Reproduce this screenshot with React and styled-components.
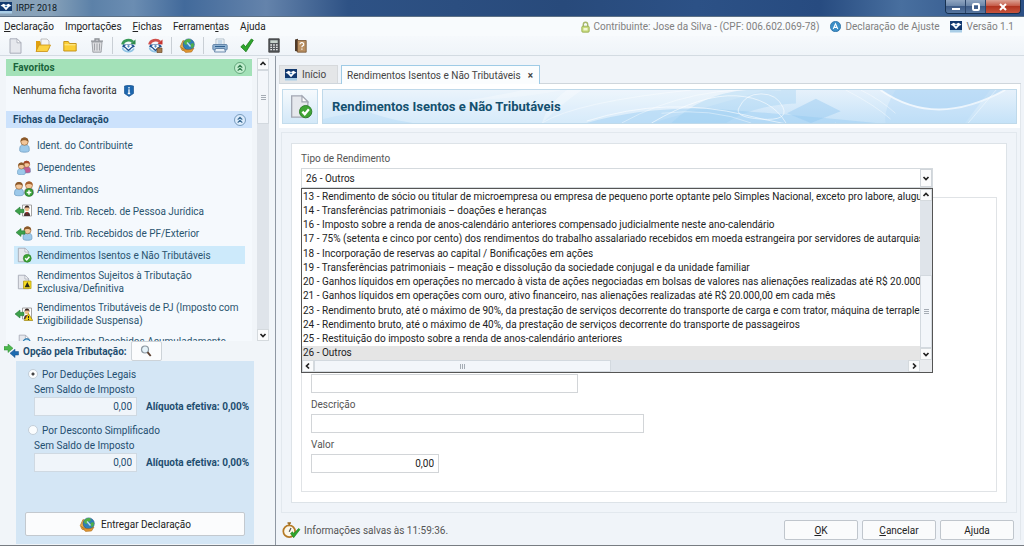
import React, { useState } from 'react';
import styled, { createGlobalStyle, css } from 'styled-components';

const GlobalStyle = createGlobalStyle`
    * {
        box-sizing: border-box;
    }
    body {
        margin: 0;
        font-family: Roboto, "Liberation Sans", sans-serif;
        font-size: 10px;
        line-height: 13px;
        color: #333;
        background: #f0f4f8;
    }
    button, input {
        font: inherit;
        color: inherit;
        margin: 0;
        padding: 0;
    }
    ul {
        list-style: none;
        margin: 0;
        padding: 0;
    }
    svg {
        display: block;
        flex: none;
    }
`;

/* window */

const Window = styled.div`
    display: flex;
    flex-direction: column;
    height: 100vh;
    min-height: 540px;
    overflow: hidden;
    border-bottom: 1px solid #777c82;
`;

const TitleBar = styled.div`
    display: flex;
    align-items: flex-start;
    justify-content: space-between;
    height: 17px;
    flex: none;
    padding-right: 3px;
    border-bottom: 1px solid #5d7186;
    background: linear-gradient(90deg, #8ba3b8 0, #86a1b9 5%, #5c81a8 9%, #6b8db2 13%, #426a9b 18%, #6483ab 26%, #2e5285 34%, #284a7b 55%, #2c5186 68%, #274b80 80%, #486f9f 88%, #2b4f85 100%);
`;

const Title = styled.div`
    display: flex;
    align-items: center;
    gap: 4px;
    height: 16px;
    font-size: 9px;
    color: #0b1622;
`;

const WindowButtons = styled.div`
    display: flex;
    height: 14px;
    border: 1px solid #16304f;
    border-top: none;
    border-radius: 0 0 4px 4px;
    overflow: hidden;
`;

const WindowButton = styled.button`
    display: flex;
    align-items: center;
    justify-content: center;
    width: ${(props) => (props.$close ? 34 : 20)}px;
    border: none;
    border-right: ${(props) => (props.$close ? 'none' : '1px solid #2b456a')};
    background: ${(props) => (props.$close
        ? 'linear-gradient(#dba295, #c55b48 45%, #b03420 50%, #c8543d)'
        : 'linear-gradient(#8fa5c1, #6b86a9 45%, #3e5c88 50%, #57769f)')};
`;

const MenuBar = styled.div`
    display: flex;
    align-items: center;
    justify-content: space-between;
    height: 19px;
    flex: none;
    padding: 0 10px 0 4px;
    background: #f8fbfd;
`;

const MenuList = styled.div`
    display: flex;
    gap: 11px;
`;

const MenuButton = styled.button`
    border: none;
    background: none;
    color: #222;
`;

const InfoList = styled.div`
    display: flex;
    gap: 11px;
    color: #808080;
`;

const Info = styled.span`
    display: flex;
    align-items: center;
    gap: 4px;
`;

const ToolBar = styled.div`
    display: flex;
    align-items: center;
    height: 20px;
    flex: none;
    padding-left: 7px;
    border-bottom: 1px solid #d3dbe2;
    background: linear-gradient(#f6f9fc, #eff4f9);
`;

const ToolButton = styled.button`
    display: flex;
    align-items: center;
    justify-content: center;
    width: 17px;
    height: 18px;
    margin-right: ${(props) => props.$gap || 10}px;
    border: none;
    background: none;
`;

const ToolSeparator = styled.span`
    width: 1px;
    height: 17px;
    margin-right: 7px;
    background: #c9cfd5;
`;

const Content = styled.div`
    display: flex;
    flex: 1;
    min-height: 0;
`;

/* sidebar */

const Sidebar = styled.aside`
    display: flex;
    flex-direction: column;
    flex: none;
    width: 276px;
    padding-top: 2px;
    border-right: 1px solid #8f98a3;
    background: #f1f5f9;
    color: #24506f;
`;

const SidebarScroll = styled.div`
    display: flex;
    justify-content: space-between;
    flex: 1;
    min-height: 0;
    padding: 0 6px;
    overflow: hidden;
`;

const SidebarGroups = styled.div`
    width: 246px;
    padding-top: 1px;
    overflow: hidden;
    background: #f5f9fd;
`;

const GroupHeader = styled.h2`
    display: flex;
    align-items: center;
    justify-content: space-between;
    height: 17px;
    margin: 0;
    padding: 0 6px 0 7px;
    font-size: 10px;
    font-weight: 700;
    color: ${(props) => (props.$green ? '#19633a' : '#1c4a6c')};
    background: ${(props) => (props.$green ? '#a3e1b8' : '#cce2fc')};
`;

const CollapseButton = styled.button`
    display: flex;
    width: 12px;
    height: 12px;
    border: none;
    background: none;
`;

const Empty = styled.p`
    display: flex;
    align-items: center;
    gap: 7px;
    margin: 0;
    padding: 8px 7px 14px;
    color: #333;
`;

const NavList = styled.ul`
    padding: 8px 7px 0 8px;
`;

const NavItem = styled.a`
    display: flex;
    align-items: center;
    gap: 3px;
    height: ${(props) => (props.$tall ? 28 : 18)}px;
    margin-bottom: 4px;
    color: #2a546f;
    text-decoration: none;
    ${(props) => props.$active && css`
        background: #cdeafb;
    `}
`;

const NavIcon = styled.span`
    display: flex;
    justify-content: center;
    flex: none;
    width: 20px;
`;

const Options = styled.section`
    flex: none;
    color: #1f4e70;
`;

const OptionsHeader = styled.div`
    display: flex;
    align-items: center;
    gap: 4px;
    height: 20px;
    padding-left: 4px;
    font-weight: 700;
`;

const SearchButton = styled.button`
    display: flex;
    align-items: center;
    justify-content: center;
    width: 31px;
    height: 20px;
    border: 1px solid #cdd3d8;
    border-radius: 2px;
    background: #fbfcfd;
`;

const OptionsBody = styled.div`
    display: flex;
    flex-direction: column;
    height: 183px;
    margin: 0 21px 1px 16px;
    padding: 5px 9px 8px;
    background: #d4e6f5;
`;

const RadioLabel = styled.label`
    display: flex;
    align-items: center;
    gap: 4px;
    height: 16px;
    margin-left: 3px;
`;

const Radio = styled.input`
    appearance: none;
    width: 10px;
    height: 10px;
    border: 1px solid #c3ced8;
    border-radius: 50%;
    background: #fbfdfe;

    &:checked {
        background: radial-gradient(circle, #444 0, #444 1px, #fbfdfe 2px);
    }
`;

const OptionField = styled.div`
    display: grid;
    grid-template-columns: 103px auto;
    align-items: center;
    column-gap: 9px;
    margin: 0 0 6px 9px;
    white-space: nowrap;
`;

const OptionLabel = styled.label`
    grid-column: 1 / 3;
    height: 15px;
    line-height: 15px;
`;

const OptionInput = styled.input`
    width: 103px;
    height: 19px;
    padding: 0 4px;
    border: 1px solid #cfd9e2;
    background: #f0f5fa;
    text-align: right;
`;

const SubmitButton = styled.button`
    display: flex;
    align-items: center;
    justify-content: center;
    gap: 5px;
    height: 24px;
    margin-top: auto;
    border: 1px solid #c3c9cf;
    border-radius: 2px;
    background: #fbfcfd;
    color: #222;
`;

/* scroll bars */

const Bar = styled.div`
    display: flex;
    flex-direction: ${(props) => (props.$horizontal ? 'row' : 'column')};
    flex: none;
    ${(props) => (props.$horizontal ? 'height: 12px;' : 'width: 12px;')}
    background: #dfe4ea;
`;

const BarButton = styled.button`
    display: flex;
    align-items: center;
    justify-content: center;
    flex: none;
    width: 12px;
    height: 12px;
    border: 1px solid #d5dade;
    background: #fafbfc;
`;

const BarTrack = styled.div`
    display: flex;
    flex-direction: inherit;
    justify-content: ${(props) => (props.$end ? 'flex-end' : 'flex-start')};
    flex: 1;
    min-height: 0;
`;

const BarThumb = styled.div`
    display: flex;
    align-items: center;
    justify-content: center;
    flex: 0 0 ${(props) => props.$size};
    border: 1px solid #d3d9df;
    background: #f3f6fa;
`;

/* main area */

const Main = styled.main`
    display: flex;
    flex-direction: column;
    flex: 1;
    min-width: 0;
    padding: 9px 3px 5px;
    background: #f0f4f9;
`;

const Tabs = styled.div`
    display: flex;
    align-items: flex-end;
    gap: 3px;
    flex: none;
    height: 19px;
    border-bottom: 1px solid #cfd6dc;
`;

const Tab = styled.button`
    display: flex;
    align-items: center;
    gap: 5px;
    height: ${(props) => (props.$active ? 19 : 18)}px;
    padding: 0 ${(props) => (props.$active ? 6 : 11)}px 0 5px;
    border: 1px solid ${(props) => (props.$active ? '#9fcbe6' : '#d6d9dc')};
    border-bottom: none;
    background: ${(props) => (props.$active ? '#fbfdfe' : '#e4e6e8')};
    color: #444;
    ${(props) => props.$active && css`
        margin-bottom: -1px;
    `}
`;

const TabClose = styled.span`
    margin-left: 2px;
    font-weight: 700;
`;

const Page = styled.div`
    display: flex;
    flex-direction: column;
    flex: 1;
    min-height: 0;
    border-right: 1px solid #e2e7ec;
`;

const PageHeader = styled.div`
    display: flex;
    gap: 4px;
    flex: none;
    height: 44px;
    padding: 5px 3px 4px;
    background: #fff;
`;

const PageIcon = styled.div`
    display: flex;
    align-items: center;
    justify-content: center;
    width: 36px;
    border: 1px solid #c3dcec;
    background: linear-gradient(#f6fafd, #d3e8f8);
`;

const Banner = styled.div`
    position: relative;
    display: flex;
    align-items: center;
    flex: 1;
    padding-left: 9px;
    border: 1px solid #bfd9ea;
    background: linear-gradient(#e6f1fb, #c5e2f8);

    svg {
        position: absolute;
        inset: 0;
        width: 100%;
        height: 100%;
    }
`;

const PageTitle = styled.h1`
    position: relative;
    margin: 0;
    font-size: 13px;
    line-height: 16px;
    font-weight: 700;
    color: #14506f;
`;

const Outer = styled.div`
    display: flex;
    flex: 1;
    min-height: 0;
    margin: 4px 3px 0 2px;
    padding: 10px 9px 9px;
    border: 1px solid #e2e8ee;
`;

const Form = styled.form`
    display: flex;
    flex-direction: column;
    flex: 1;
    padding: 7px 9px 10px;
    border: 1px solid #dde3e8;
    background: #fff;
`;

const FieldLabel = styled.label`
    height: 17px;
    line-height: 15px;
    color: #555;
`;

const Combo = styled.div`
    position: relative;
    display: flex;
    flex: none;
    height: 20px;
    margin-right: 64px;
    border: 1px solid #d5dade;
    background: #fff;
`;

const ComboInput = styled.input`
    flex: 1;
    min-width: 0;
    padding: 0 4px;
    border: none;
    outline: none;
    background: none;
    color: #222;
`;

const ComboButton = styled.button`
    display: flex;
    align-items: center;
    justify-content: center;
    width: 12px;
    border: 1px solid #d0d5da;
    background: #fafbfc;
`;

const Popup = styled.div`
    position: absolute;
    z-index: 2;
    top: 19px;
    left: -1px;
    right: -1px;
    height: 185px;
    display: flex;
    flex-direction: column;
    border: 1px solid #555;
    background: #fff;
`;

const PopupTop = styled.div`
    display: flex;
    flex: 1;
    min-height: 0;
`;

const PopupBottom = styled.div`
    background: #e9ebee;
    padding-right: 12px;
`;

const OptionList = styled.ul`
    display: flex;
    flex-direction: column;
    flex: 1;
    min-width: 0;
    overflow: hidden;
    color: #222;
`;

const Option = styled.li`
    display: flex;
    align-items: center;
    flex: 1;
    min-height: 0;
    padding-left: 1px;
    white-space: nowrap;
    background: ${(props) => (props.$selected ? '#e5e5e5' : 'transparent')};
`;

const Details = styled.div`
    display: flex;
    flex-direction: column;
    flex: 1;
    justify-content: flex-end;
    margin-top: 9px;
    padding: 0 9px 18px;
    border: 1px solid #e0e3e6;
`;

const TextInput = styled.input`
    width: ${(props) => props.$width}px;
    height: 19px;
    margin-bottom: ${(props) => (props.$last ? 0 : 4)}px;
    padding: 0 4px;
    border: 1px solid #d2d5d8;
    background: #fff;
    color: #222;
    text-align: ${(props) => (props.$number ? 'right' : 'left')};
`;

const Footer = styled.div`
    display: flex;
    align-items: center;
    justify-content: space-between;
    flex: none;
    padding: 7px 6px 0 3px;
`;

const Status = styled.span`
    display: flex;
    align-items: center;
    gap: 3px;
    color: #555;
`;

const Actions = styled.div`
    display: flex;
    gap: 4px;
`;

const ActionButton = styled.button`
    width: 74px;
    height: 20px;
    border: 1px solid #c0c6cd;
    border-radius: 2px;
    background: #fafbfc;
    color: #222;
`;

/* icons */

const Chevron = ({ dir = 'down' }) => {
    const angle = { down: 0, left: 90, up: 180, right: 270 }[dir];
    return (
        <svg width="8" height="8" viewBox="0 0 8 8">
            <path d="M1.5 3 4 5.5 6.5 3" fill="none" stroke="#222" strokeWidth="1.7" transform={`rotate(${angle} 4 4)`} />
        </svg>
    );
};

const Grip = ({ vertical }) => (
    <svg width="7" height="7" viewBox="0 0 7 7">
        <path d={vertical ? 'M1.5 1v5M3.5 1v5M5.5 1v5' : 'M1 1.5h5M1 3.5h5M1 5.5h5'} stroke="#a5acb4" />
    </svg>
);

const DoubleUp = ({ color, fill }) => (
    <svg width="12" height="12" viewBox="0 0 12 12">
        <circle cx="6" cy="6" r="5.5" fill={fill} stroke={color} strokeWidth=".6" />
        <path d="M3.7 5.7 6 3.4l2.3 2.3M3.7 8.7 6 6.4l2.3 2.3" fill="none" stroke={color} strokeWidth="1.2" />
    </svg>
);

const LogoIcon = () => (
    <svg width="12" height="12" viewBox="0 0 12 12">
        <path d="M0 0h12v9H0z" fill="#12396f" />
        <path d="M0 9h12v2.5H0z" fill="#a9cde6" />
        <path d="M.5 3.8 3.5 1.8 6 3l2.5-1.2 3 2-2.3 1L6 8.300 2.800 4.800z" fill="#fff" />
        <path d="m4.5 4.3 1.500-.7 1.500.7L6 5.500z" fill="#2b6aa8" />
    </svg>
);

const LockIcon = () => (
    <svg width="9" height="12" viewBox="0 0 9 12">
        <path d="M2.3 6V3.4a2.2 2.2 0 0 1 4.4 0V6" fill="none" stroke="#a6b86c" strokeWidth="1.4" />
        <rect x=".8" y="5.2" width="7.4" height="6" rx="1" fill="#c8dc7c" stroke="#94a84c" strokeWidth=".8" />
        <path d="M2.5 7h4v2.4h-4z" fill="#f1f7d4" />
    </svg>
);

const AdjustIcon = () => (
    <svg width="11" height="11" viewBox="0 0 11 11">
        <circle cx="5.5" cy="5.5" r="5.2" fill="#3c8ec6" stroke="#1f6298" strokeWidth=".6" />
        <path d="M3.2 8 5.5 2.8 7.8 8M4 6.4h3" fill="none" stroke="#fff" strokeWidth="1.1" />
    </svg>
);

const FileShape = () => (
    <>
        <path d="M2.5.8h7l4 4v10.400h-11z" fill="#e6e8ed" stroke="#a3a7b3" strokeWidth=".9" />
        <path d="M9.5.8v4h4z" fill="#fff" stroke="#a3a7b3" strokeWidth=".8" />
    </>
);

const NewIcon = () => (
    <svg width="15" height="16" viewBox="1 0 14 16"><FileShape /></svg>
);

const OpenIcon = () => (
    <svg width="16" height="15" viewBox="0 0 16 15">
        <path d="M1 13V3h4l1 2h4v8z" fill="#e0a010" />
        <path d="M6 1h6l2 2v8H6z" fill="#f4f4f4" stroke="#a9a9a9" strokeWidth=".7" />
        <path d="M1 13.5 4 7h11.5l-3 6.5z" fill="#fcd242" stroke="#c98f10" strokeWidth=".8" />
    </svg>
);

const FolderIcon = () => (
    <svg width="14" height="14" viewBox="0 0 14 14">
        <path d="M.8 12V2.5h4.5l1.2 2h6.7V12z" fill="#fbcf35" stroke="#c08d12" strokeWidth=".9" />
        <path d="M1.5 5.8h11" stroke="#fdeb9a" />
    </svg>
);

const TrashIcon = () => (
    <svg width="14" height="15" viewBox="0 0 14 15">
        <path d="M2 4h10l-.9 10.2H2.9z" fill="#dddee1" stroke="#999ca2" strokeWidth=".9" />
        <path d="M4.5 5.5v7M7 5.5v7M9.500 5.5v7" stroke="#a0a3a8" />
        <path d="M1 3.2h12M5 2.6V1h4v1.600" fill="none" stroke="#8b8e94" strokeWidth="1.3" />
    </svg>
);

const SyncIcon = ({ red }) => (
    <svg width="15" height="15" viewBox="0 0 15 15">
        <path d="M1.500 6.500a6 5.300 0 0 1 10.500-2.500" fill="none" stroke={red ? '#d0504c' : '#3a9a58'} strokeWidth="2.800" />
        <path d="m9.500 6 5 .5V1.500z" fill={red ? '#c73430' : '#2f8a4c'} />
        <path d="M2.500 6.500h9.500l2 2-3 1.500-3.500 3.500L4 10 1 8.500z" fill="#1c4f90" />
        <path d="m3.500 8 2-1.200 2 1 2-1 2 1.200-4 3.500z" fill="#fff" />
        <path d="m6 8.600 1.500-.6 1.500.6-1.500 1.200z" fill="#3f82bd" />
        <path d="M1.500 9.500a6 5 0 0 0 11.500 1" fill="none" stroke="#8fc3e4" strokeWidth="1.600" />
        {red && <path d="M9 10h5v4.500H9z" fill="#a57c50" stroke="#6d4b28" strokeWidth=".7" />}
    </svg>
);

const GlobeIcon = () => (
    <svg width="17" height="15" viewBox="0 0 16 15">
        <path d="M.8 8.500 3.500 2.500l4 2 1 9-6-1.200z" fill="#eeb04a" stroke="#b0711c" strokeWidth=".7" />
        <circle cx="9.200" cy="6.500" r="5.600" fill="#2f7fb8" stroke="#1c5280" strokeWidth=".6" />
        <path d="M4.500 4a6 6 0 0 1 6-3l1 2.500-3 1.500-1 2-2.500-.8zM11 6l3-1 .5 3-2.500 2.500z" fill="#4fb04a" />
        <path d="M2 9.500c3 2.500 7.500 3.500 12.500.5l-2.500 4-6 .4z" fill="#e49a34" stroke="#a9681a" strokeWidth=".6" />
        <path d="M7.500 4.500 11 8.500" stroke="#bfe3f4" strokeWidth="1.400" />
    </svg>
);

const PrinterIcon = () => (
    <svg width="16" height="15" viewBox="0 0 16 15">
        <path d="M4 1h8v6H4z" fill="#fff" stroke="#9fb0be" strokeWidth=".8" />
        <path d="M5.500 3h5M5.500 5h5" stroke="#8fb6d6" />
        <rect x=".8" y="6.500" width="14.400" height="5.500" rx="1" fill="#8fb2d2" stroke="#5478a0" strokeWidth=".8" />
        <path d="M3.500 10.500h9l1 3.500h-11z" fill="#e8f1f8" stroke="#4c719a" strokeWidth=".8" />
        <path d="M3 8.500h10" stroke="#2f6090" />
    </svg>
);

const CheckIcon = () => (
    <svg width="14" height="15" viewBox="0 0 14 15">
        <path d="M.8 8.800 3.500 6.300l2 2.500L11.300 1l2 1.200-7.300 11.600z" fill="#2fa62c" stroke="#1a7a1c" strokeWidth=".8" />
    </svg>
);

const CalcIcon = () => (
    <svg width="12" height="15" viewBox="0 0 12 15">
        <path d="M.8.800h10.400v13.400H.800z" fill="#55595c" stroke="#333" strokeWidth=".8" />
        <path d="M2.300 2.300h7.400v2.700H2.300z" fill="#c8d3cc" />
        <path d="M2.300 7h7.400M2.300 9.300h7.400M2.300 11.600h7.400" stroke="#e6e6e6" strokeWidth="1.300" strokeDasharray="1.700 1.150" />
    </svg>
);

const HelpBookIcon = () => (
    <svg width="13" height="15" viewBox="0 0 13 15">
        <path d="M1 1.500 4 .800v13L1 13z" fill="#4e3a2a" />
        <path d="M3.500 2.500h8.700v11.700H3.500z" fill="#b98f62" stroke="#735031" strokeWidth=".8" />
        <path d="M6 6.400a1.900 1.700 0 1 1 2.600 1.500c-.6.300-.7.700-.7 1.400M7.900 10.500v1.300" fill="none" stroke="#fff" strokeWidth="1.200" />
    </svg>
);

const InfoIcon = () => (
    <svg width="10" height="12" viewBox="0 0 10 12">
        <path d="M.5 1Q5-.500 9.500 1v7.500L5 11.500.500 8.500z" fill="#1d67ae" stroke="#0f4a86" strokeWidth=".6" />
        <path d="M5 2v1.400M5 4.300v4.200M3.800 8.500h2.400" stroke="#fff" strokeWidth="1.300" />
    </svg>
);

const Figure = ({ x = 0, y = 0, hair = '#8b5a2b', shirt = '#9cc9ea' }) => (
    <g transform={`translate(${x} ${y})`}>
        <path d="M.6 13C.2 8.500 1.500 7 5 7s4.800 1.500 4.400 6c-.1 1.700-8.700 1.700-8.800 0z" fill={shirt} stroke="#5b8fb8" strokeWidth=".6" />
        <circle cx="5" cy="4.300" r="3.500" fill="#f3c79a" stroke={hair} strokeWidth=".6" />
        <path d="M1.500 4.500C1 1.500 3 .400 5 .400s4 1.100 3.500 4.100C7.500 3 3.500 2.200 1.500 4.500z" fill={hair} />
    </g>
);

const PersonIcon = () => (
    <svg width="11" height="16" viewBox="0 0 10 15"><Figure /></svg>
);

const FamilyIcon = () => (
    <svg width="14" height="15" viewBox="0 0 16 16">
        <Figure x={6} y={0} hair="#a44a28" shirt="#c45c92" />
        <Figure x={0} y={2} />
    </svg>
);

const DependentsIcon = () => (
    <svg width="20" height="16" viewBox="0 0 20 16">
        <Figure x={10} y={0} hair="#a4602c" shirt="#d9a06a" />
        <Figure x={0} y={.5} />
        <circle cx="15" cy="11.500" r="4" fill="#3aa33a" stroke="#1e6f22" strokeWidth=".6" />
        <path d="M15 9.200v4.600M12.700 11.500h4.600" stroke="#fff" strokeWidth="1.500" />
    </svg>
);

const CompanyIcon = ({ warning }) => (
    <svg width="18" height="14" viewBox="0 0 18 14">
        <path d="M7.500 1h9v11h-9z" fill="#fff" stroke="#8d8d8d" strokeWidth=".8" />
        <path d="M9 12c0-3 1-4 3-4s3 1 3 4z" fill="#4a3030" />
        <circle cx="12" cy="5" r="2.200" fill="#f0c090" />
        <path d="M9.500 5c0-3 1-3.500 2.500-3.500s2.500.500 2.500 3.500l-1-1.500h-3z" fill="#3a2620" />
        <path d="m11.400 8 .6 3 .6-3z" fill="#d22" />
        <path d="M0 7 5 3v2.300h4v3.400H5V11z" fill="#3da04a" stroke="#1f7030" strokeWidth=".5" />
        {warning && <path d="m13.500 6.500 4.300 7H9.200z" fill="#f7d417" stroke="#8b7200" strokeWidth=".6" />}
        {warning && <path d="M13.500 9v2.300M13.500 12v.900" stroke="#222" strokeWidth="1.100" />}
    </svg>
);

const PersonArrowIcon = () => (
    <svg width="17" height="15" viewBox="0 0 17 15">
        <Figure x={6.500} y={0} />
        <path d="M0 6.500 5 2.500v2.300h4v3.400H5v2.300z" fill="#3da04a" stroke="#1f7030" strokeWidth=".5" />
    </svg>
);

const DocCheckIcon = ({ size = 16 }) => (
    <svg width={size} height={size} viewBox="0 0 17 16">
        <FileShape />
        <circle cx="12" cy="11.500" r="4.200" fill="#3fa535" stroke="#277722" strokeWidth=".6" />
        <path d="m9.800 11.500 1.600 1.700 2.800-3.300" fill="none" stroke="#fff" strokeWidth="1.600" />
    </svg>
);

const DocWarnIcon = () => (
    <svg width="16" height="16" viewBox="0 0 17 16">
        <FileShape />
        <path d="M8 7h8v8H8z" fill="#f7dc22" stroke="#a38b00" strokeWidth=".7" />
        <path d="m12 8 2.800 5.500H9.200z" fill="#2b2b1a" />
    </svg>
);

const DocSearchIcon = () => (
    <svg width="15" height="15" viewBox="0 0 17 16">
        <FileShape />
        <circle cx="11" cy="9" r="4" fill="#d3ecf8" stroke="#2a7ab0" strokeWidth="1.400" />
    </svg>
);

const SwapIcon = () => (
    <svg width="15" height="14" viewBox="0 0 15 14">
        <path d="M0 2.500h4V0l5 4.300-5 4.200V6H0z" fill="#4cb84c" stroke="#2b8a32" strokeWidth=".5" />
        <path d="M14.500 7.500H11V5.200L6 9.300l5 4.300V11h3.500z" fill="#1e6cb0" stroke="#124d86" strokeWidth=".5" />
    </svg>
);

const SearchIcon = () => (
    <svg width="12" height="12" viewBox="0 0 11 12">
        <circle cx="4.500" cy="4.500" r="3.500" fill="#e6f3fa" stroke="#8d99a2" strokeWidth="1.200" />
        <path d="m7 7.200 3.200 3.800" stroke="#5c4030" strokeWidth="1.900" />
    </svg>
);

const ClockIcon = () => (
    <svg width="19" height="17" viewBox="0 0 19 17">
        <path d="M5.500 1h3.500M7.200 1v3" stroke="#9a6a22" strokeWidth="1.600" />
        <circle cx="7.200" cy="9.200" r="5.900" fill="#fdf8ea" stroke="#b57a26" strokeWidth="1.700" />
        <path d="M7.200 9.800 9 6" stroke="#555" strokeWidth="1.200" />
        <path d="m8.500 11.500 2-1.700 1.300 1.800 4.700-5.100 1.500 1-6.300 8.200z" fill="#2fa62c" stroke="#1a7a1c" strokeWidth=".6" />
    </svg>
);

const BannerArt = () => (
    <svg viewBox="0 0 696 34" preserveAspectRatio="none" aria-hidden="true">
        <path d="M0 0h240C180 14 90 8 0 30z" fill="#fff" opacity=".2" />
        <path d="M30 14q20 14 60 20h130q20-20 40-34H200Q120 20 30 14z" fill="#fff" opacity=".3" />
        <path d="M220 34Q225 15 245 0h200L330 34z" fill="#fff" opacity=".3" />
        <path d="M265 34q70-20 150-13t140 13z" fill="#9fd0f3" opacity=".5" />
        <path d="M350 34q30-30 75-34h50v14q-45 2-70 20z" fill="#9ccdf2" opacity=".35" />
        <path d="M466 24 495 9l25 13-30 12z" fill="#8fc6f0" opacity=".4" />
        <path d="M560 0q60 40 125 0z" fill="#9dcdf2" opacity=".45" />
        <path d="M575 0q-12 20-10 34h80l25-34z" fill="#b2d8f5" opacity=".35" />
        <g fill="none" stroke="#fff">
            <path d="M265 32q80-26 160-6t90 8M330 34q50-30 85-28t50 28M418 18q6-14 22-14t22 14-22 12-22-12" opacity=".6" />
            <path d="M560 0q55 40 125 0" strokeWidth="2" opacity=".7" />
            <path d="M525 0q30 16 45 30M540 0q20 10 35 24M648 34 676 0M300 34q70-40 160-34" opacity=".4" />
            <path d="M220 34q35-22 150-34M340 24q50-6 90 10" opacity=".4" />
        </g>
    </svg>
);

const navItems = [
    { label: 'Ident. do Contribuinte', icon: <PersonIcon /> },
    { label: 'Dependentes', icon: <FamilyIcon /> },
    { label: 'Alimentandos', icon: <DependentsIcon /> },
    { label: 'Rend. Trib. Receb. de Pessoa Jurídica', icon: <CompanyIcon /> },
    { label: 'Rend. Trib. Recebidos de PF/Exterior', icon: <PersonArrowIcon /> },
    { label: 'Rendimentos Isentos e Não Tributáveis', icon: <DocCheckIcon />, active: true },
    { label: 'Rendimentos Sujeitos à Tributação Exclusiva/Definitiva', icon: <DocWarnIcon />, tall: true },
    { label: 'Rendimentos Tributáveis de PJ (Imposto com Exigibilidade Suspensa)', icon: <CompanyIcon warning />, tall: true },
    { label: 'Rendimentos Recebidos Acumuladamente', icon: <DocSearchIcon /> },
];

const incomeTypes = [
    '13 - Rendimento de sócio ou titular de microempresa ou empresa de pequeno porte optante pelo Simples Nacional, exceto pro labore, aluguéis e serviços',
    '14 - Transferências patrimoniais – doações e heranças',
    '16 - Imposto sobre a renda de anos-calendário anteriores compensado judicialmente neste ano-calendário',
    '17 - 75% (setenta e cinco por cento) dos rendimentos do trabalho assalariado recebidos em moeda estrangeira por servidores de autarquias ou repartições',
    '18 - Incorporação de reservas ao capital / Bonificações em ações',
    '19 - Transferências patrimoniais – meação e dissolução da sociedade conjugal e da unidade familiar',
    '20 - Ganhos líquidos em operações no mercado à vista de ações negociadas em bolsas de valores nas alienações realizadas até R$ 20.000,00 em cada mês',
    '21 - Ganhos líquidos em operações com ouro, ativo financeiro, nas alienações realizadas até R$ 20.000,00 em cada mês',
    '23 - Rendimento bruto, até o máximo de 90%, da prestação de serviços decorrente do transporte de carga e com trator, máquina de terraplenagem, colheitadeira',
    '24 - Rendimento bruto, até o máximo de 40%, da prestação de serviços decorrente do transporte de passageiros',
    '25 - Restituição do imposto sobre a renda de anos-calendário anteriores',
    '26 - Outros',
];

const ScrollBar = ({ horizontal, size, end }) => (
    <Bar $horizontal={horizontal}>
        <BarButton type="button" aria-label="Voltar"><Chevron dir={horizontal ? 'left' : 'up'} /></BarButton>
        <BarTrack $end={end}>
            <BarThumb $size={size}><Grip vertical={horizontal} /></BarThumb>
        </BarTrack>
        <BarButton type="button" aria-label="Avançar"><Chevron dir={horizontal ? 'right' : 'down'} /></BarButton>
    </Bar>
);

const Header = () => (
    <>
        <TitleBar>
            <Title><LogoIcon />IRPF 2018</Title>
            <WindowButtons>
                <WindowButton aria-label="Minimizar">
                    <svg width="10" height="8"><path d="M1 5h8v2H1z" fill="#fff" /></svg>
                </WindowButton>
                <WindowButton aria-label="Restaurar">
                    <svg width="10" height="8"><rect x="2" y="1" width="6" height="6" rx="1" fill="none" stroke="#fff" strokeWidth="2" /></svg>
                </WindowButton>
                <WindowButton $close aria-label="Fechar">
                    <svg width="10" height="8"><path d="m2 1 6 6M8 1 2 7" stroke="#fff" strokeWidth="2" /></svg>
                </WindowButton>
            </WindowButtons>
        </TitleBar>
        <MenuBar>
            <MenuList>
                <MenuButton><u>D</u>eclaração</MenuButton>
                <MenuButton>Im<u>p</u>ortações</MenuButton>
                <MenuButton><u>F</u>ichas</MenuButton>
                <MenuButton>Ferramen<u>t</u>as</MenuButton>
                <MenuButton>A<u>j</u>uda</MenuButton>
            </MenuList>
            <InfoList>
                <Info><LockIcon />Contribuinte: Jose da Silva - (CPF: 006.602.069-78)</Info>
                <Info><AdjustIcon />Declaração de Ajuste</Info>
                <Info><LogoIcon />Versão 1.1</Info>
            </InfoList>
        </MenuBar>
        <ToolBar>
            <ToolButton aria-label="Nova"><NewIcon /></ToolButton>
            <ToolButton aria-label="Abrir"><OpenIcon /></ToolButton>
            <ToolButton aria-label="Pasta"><FolderIcon /></ToolButton>
            <ToolButton aria-label="Excluir" $gap={7}><TrashIcon /></ToolButton>
            <ToolSeparator />
            <ToolButton aria-label="Importar"><SyncIcon /></ToolButton>
            <ToolButton aria-label="Retificar" $gap={7}><SyncIcon red /></ToolButton>
            <ToolSeparator />
            <ToolButton aria-label="Entregar" $gap={7}><GlobeIcon /></ToolButton>
            <ToolSeparator />
            <ToolButton aria-label="Imprimir"><PrinterIcon /></ToolButton>
            <ToolButton aria-label="Verificar"><CheckIcon /></ToolButton>
            <ToolButton aria-label="Calculadora"><CalcIcon /></ToolButton>
            <ToolButton aria-label="Ajuda"><HelpBookIcon /></ToolButton>
        </ToolBar>
    </>
);

const TaxOption = ({ id, label, checked, onChange }) => (
    <>
        <RadioLabel>
            <Radio type="radio" name="tributacao" checked={checked} onChange={onChange} />
            {label}
        </RadioLabel>
        <OptionField>
            <OptionLabel htmlFor={id}>Sem Saldo de Imposto</OptionLabel>
            <OptionInput id={id} value="0,00" readOnly />
            <b>Alíquota efetiva: 0,00%</b>
        </OptionField>
    </>
);

const SideMenu = () => {
    const [option, setOption] = useState('legais');

    return (
        <Sidebar>
            <SidebarScroll>
                <SidebarGroups>
                    <GroupHeader $green>
                        Favoritos
                        <CollapseButton aria-label="Recolher favoritos"><DoubleUp color="#2f7a4c" fill="#c3efd0" /></CollapseButton>
                    </GroupHeader>
                    <Empty>Nenhuma ficha favorita <InfoIcon /></Empty>
                    <GroupHeader>
                        Fichas da Declaração
                        <CollapseButton aria-label="Recolher fichas"><DoubleUp color="#3a6a92" fill="#dcecfd" /></CollapseButton>
                    </GroupHeader>
                    <NavList>
                        {navItems.map((item) => (
                            <li key={item.label}>
                                <NavItem href="#" $active={item.active} $tall={item.tall}>
                                    <NavIcon>{item.icon}</NavIcon>
                                    {item.label}
                                </NavItem>
                            </li>
                        ))}
                    </NavList>
                </SidebarGroups>
                <ScrollBar size="54px" />
            </SidebarScroll>
            <Options>
                <OptionsHeader>
                    <SwapIcon />
                    Opção pela Tributação:
                    <SearchButton aria-label="Comparar"><SearchIcon /></SearchButton>
                </OptionsHeader>
                <OptionsBody>
                    <TaxOption id="saldo-legais" label="Por Deduções Legais" checked={option === 'legais'} onChange={() => setOption('legais')} />
                    <TaxOption id="saldo-simples" label="Por Desconto Simplificado" checked={option === 'simples'} onChange={() => setOption('simples')} />
                    <SubmitButton><GlobeIcon />Entregar Declaração</SubmitButton>
                </OptionsBody>
            </Options>
        </Sidebar>
    );
};

const IncomeForm = () => {
    const [selected, setSelected] = useState('26 - Outros');
    const [open, setOpen] = useState(true);

    return (
        <Form>
            <FieldLabel htmlFor="tipo">Tipo de Rendimento</FieldLabel>
            <Combo>
                <ComboInput id="tipo" role="combobox" aria-expanded={open} aria-controls="tipos" autoFocus value={selected} onChange={(e) => setSelected(e.target.value)} />
                <ComboButton type="button" aria-label="Abrir lista" onClick={() => setOpen(!open)}><Chevron /></ComboButton>
                {open && (
                    <Popup>
                        <PopupTop>
                            <OptionList id="tipos" role="listbox">
                                {incomeTypes.map((type) => (
                                    <Option key={type} role="option" aria-selected={type === selected} $selected={type === selected} onClick={() => setSelected(type)}>
                                        {type}
                                    </Option>
                                ))}
                            </OptionList>
                            <ScrollBar size="50%" end />
                        </PopupTop>
                        <PopupBottom>
                            <ScrollBar horizontal size="50%" />
                        </PopupBottom>
                    </Popup>
                )}
            </Combo>
            <Details>
                <TextInput $width={267} aria-label="Nome da Fonte Pagadora" />
                <FieldLabel htmlFor="descricao">Descrição</FieldLabel>
                <TextInput id="descricao" $width={333} />
                <FieldLabel htmlFor="valor">Valor</FieldLabel>
                <TextInput id="valor" $width={128} $number $last defaultValue="0,00" />
            </Details>
        </Form>
    );
};

const App = () => {
    return (
        <>
            <GlobalStyle />
            <Window>
                <Header />
                <Content>
                    <SideMenu />
                    <Main>
                        <Tabs>
                            <Tab><LogoIcon />Início</Tab>
                            <Tab $active>Rendimentos Isentos e Não Tributáveis<TabClose>×</TabClose></Tab>
                        </Tabs>
                        <Page>
                            <PageHeader>
                                <PageIcon><DocCheckIcon size={25} /></PageIcon>
                                <Banner>
                                    <BannerArt />
                                    <PageTitle>Rendimentos Isentos e Não Tributáveis</PageTitle>
                                </Banner>
                            </PageHeader>
                            <Outer>
                                <IncomeForm />
                            </Outer>
                            <Footer>
                                <Status><ClockIcon />Informações salvas às 11:59:36.</Status>
                                <Actions>
                                    <ActionButton><u>O</u>K</ActionButton>
                                    <ActionButton><u>C</u>ancelar</ActionButton>
                                    <ActionButton>A<u>j</u>uda</ActionButton>
                                </Actions>
                            </Footer>
                        </Page>
                    </Main>
                </Content>
            </Window>
        </>
    );
};

export default App;
